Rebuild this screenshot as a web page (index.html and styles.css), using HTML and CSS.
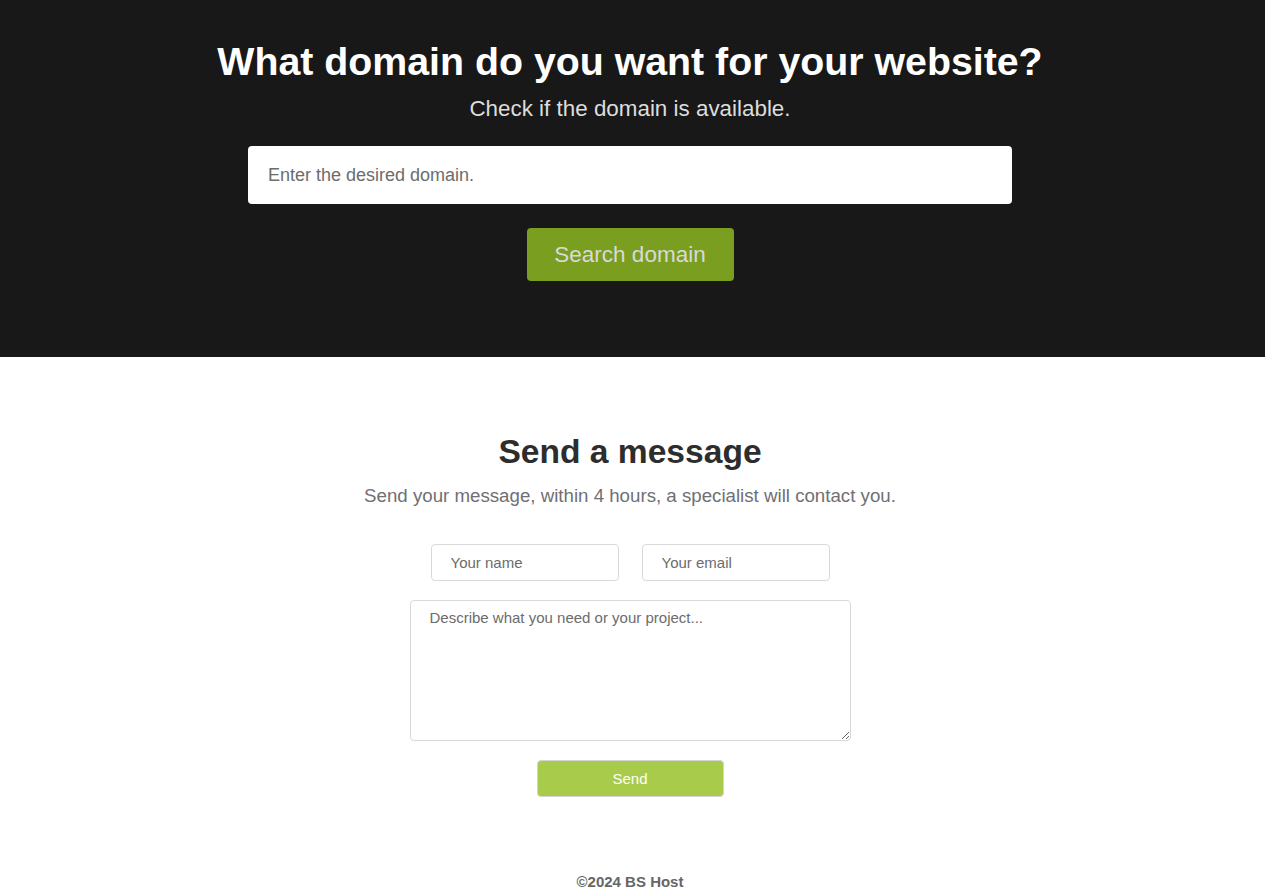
FILE: index.html
```html
<!DOCTYPE html>
<html lang="en">
<head>
<meta charset="utf-8">
<title>BS Host</title>
<link rel="stylesheet" href="styles.css">
</head>
<body>
<section class="hero">
  <h1 class="hero-title">What domain do you want for your website?</h1>
  <p class="hero-sub">Check if the domain is available.</p>
  <form class="domain-form">
    <input class="domain-input" type="text" placeholder="Enter the desired domain.">
    <button class="domain-btn" type="button">Search domain</button>
  </form>
</section>
<section class="contact">
  <h2 class="contact-title">Send a message</h2>
  <p class="contact-sub">Send your message, within 4 hours, a specialist will contact you.</p>
  <form class="contact-form">
    <div class="row">
      <input class="field" type="text" placeholder="Your name">
      <input class="field" type="email" placeholder="Your email">
    </div>
    <textarea class="area" placeholder="Describe what you need or your project..."></textarea>
    <button class="send-btn" type="button">Send</button>
  </form>
</section>
<footer class="footer">©2024 BS Host</footer>
</body>
</html>
```
FILE: styles.css
```css
* { box-sizing: border-box; }
html, body { margin: 0; padding: 0; }
body {
  font-family: "Liberation Sans", Arial, sans-serif;
  background: #fff;
}
.hero {
  background: #181818;
  height: 357px;
  padding: 38px 5px 0 0;
  display: flex;
  flex-direction: column;
  align-items: center;
}
.hero-title {
  margin: 0;
  color: #fff;
  font-size: 39.3px;
  font-weight: 700;
  line-height: 46px;
}
.hero-sub {
  margin: 10px 0 0;
  color: #ddd;
  font-size: 22.4px;
  line-height: 30px;
}
.domain-form {
  margin-top: 22px;
  display: flex;
  flex-direction: column;
  align-items: center;
}
.domain-input {
  width: 764px;
  height: 58px;
  border: none;
  border-radius: 4px;
  padding: 0 20px;
  font-family: inherit;
  font-size: 18px;
  background: #fff;
}
.domain-input::placeholder { color: #6c6c6c; }
.domain-btn {
  margin-top: 24px;
  width: 207px;
  height: 53px;
  border: none;
  border-radius: 4px;
  background: #7a9e1f;
  color: #d9d9d9;
  font-family: inherit;
  font-size: 22.5px;
}
.contact {
  padding: 75px 5px 0 0;
  display: flex;
  flex-direction: column;
  align-items: center;
}
.contact-title {
  margin: 0;
  color: #2d2d2d;
  font-size: 33.6px;
  font-weight: 700;
  line-height: 40px;
}
.contact-sub {
  margin: 12px 0 0;
  color: #6f6f75;
  font-size: 18.7px;
  line-height: 24px;
}
.contact-form {
  margin-top: 36px;
  display: flex;
  flex-direction: column;
  align-items: center;
}
.row {
  display: flex;
  gap: 23px;
}
.field {
  width: 188px;
  height: 37px;
  border: 1px solid #d9d9d9;
  border-radius: 4px;
  padding: 0 19px;
  font-family: inherit;
  font-size: 15px;
}
.field::placeholder, .area::placeholder { color: #6c6c6c; }
.area {
  margin-top: 19px;
  width: 441px;
  height: 141px;
  border: 1px solid #d9d9d9;
  border-radius: 4px;
  padding: 8px 19px;
  font-family: inherit;
  font-size: 15px;
  resize: vertical;
}
.send-btn {
  margin-top: 19px;
  width: 187px;
  height: 37px;
  border: 1px solid #d4d4d4;
  border-radius: 4px;
  background: #a8cb4c;
  color: #fff;
  font-family: inherit;
  font-size: 15px;
  padding-bottom: 2px;
}
.footer {
  margin-top: 76px;
  padding-right: 5px;
  text-align: center;
  color: #666;
  font-weight: 700;
  font-size: 15px;
}
```
